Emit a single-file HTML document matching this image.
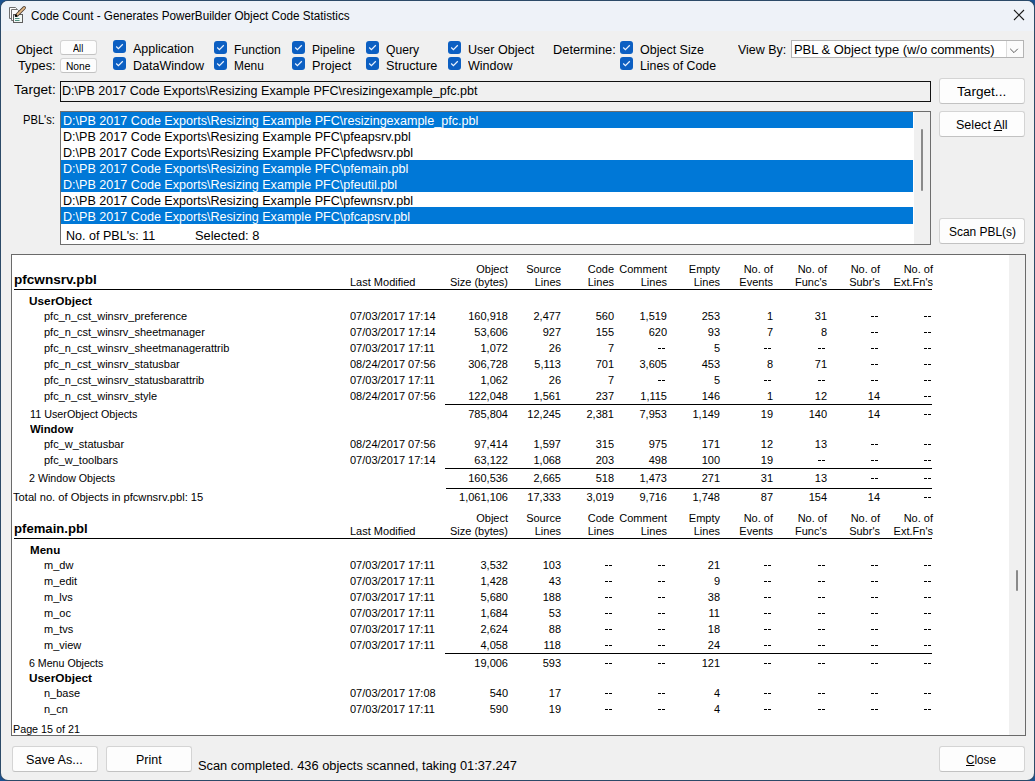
<!DOCTYPE html>
<html><head><meta charset="utf-8"><style>
html,body{margin:0;padding:0;width:1035px;height:781px;overflow:hidden;background:#1b5291;font-family:'Liberation Sans',sans-serif}
.t{position:absolute;white-space:pre;transform-origin:0 0;color:#000}
u{text-decoration:underline;text-underline-offset:1px}
</style></head><body>
<div style="position:absolute;left:0;top:0;width:1035px;height:781px;background:#1b5291"></div>
<div style="position:absolute;left:0;top:0;width:1035px;height:781px;background:#2c4a68;border-radius:8px"></div>
<div style="position:absolute;left:1px;top:1px;width:1033px;height:779px;background:#f0f0f0;border-radius:7px;overflow:hidden"><div style="position:absolute;left:0;top:0;width:1033px;height:30px;background:#eef2f8"></div></div>
<svg style="position:absolute;left:7px;top:5px" width="20" height="20" viewBox="0 0 20 20">
<path d="M2.5 2.5 H8.5 L9.5 3.5 V13.5 H2.5 Z" fill="#fbfbfb" stroke="#6e6e6e"/>
<path d="M4.5 4.5 H10.5 L11.5 5.5 V15.5 H4.5 Z" fill="#fbfbfb" stroke="#6e6e6e"/>
<rect x="6.5" y="9.5" width="9" height="8" fill="#f2f8f6" stroke="#5e5e5e"/>
<path d="M8 13.5 H12.5 M8 15.5 H12.5" stroke="#4f8f7f" stroke-width="1"/>
<path d="M17.2 2.8 L10 10" stroke="#4a3e34" stroke-width="3.4" stroke-linecap="round"/>
<path d="M17.2 2.8 L10.3 9.7" stroke="#e6b985" stroke-width="1.8" stroke-linecap="round"/>
<circle cx="9" cy="10.8" r="1.3" fill="#000"/>
</svg>
<svg style="position:absolute;left:1013px;top:9px" width="12" height="12" viewBox="0 0 12 12"><path d="M1 1 L11 11 M11 1 L1 11" stroke="#1a1a1a" stroke-width="1.1"/></svg>
<div style="position:absolute;left:60px;top:40px;width:37px;height:15px;box-sizing:border-box;background:#fdfdfd;border:1px solid #d4d4d4;border-bottom-color:#c2c2c2;border-radius:3px"></div>
<div style="position:absolute;left:60px;top:58px;width:37px;height:15px;box-sizing:border-box;background:#fdfdfd;border:1px solid #d4d4d4;border-bottom-color:#c2c2c2;border-radius:3px"></div>
<svg style="position:absolute;left:113px;top:40px" width="13" height="13" viewBox="0 0 13 13"><rect x="0" y="0" width="13" height="13" rx="3" fill="#0c5fc2"/><path d="M3.2 6.5 L5.4 8.6 L9.8 4.2" fill="none" stroke="#eaf2ff" stroke-width="1.25"/></svg>
<svg style="position:absolute;left:113px;top:57px" width="13" height="13" viewBox="0 0 13 13"><rect x="0" y="0" width="13" height="13" rx="3" fill="#0c5fc2"/><path d="M3.2 6.5 L5.4 8.6 L9.8 4.2" fill="none" stroke="#eaf2ff" stroke-width="1.25"/></svg>
<svg style="position:absolute;left:214px;top:41px" width="13" height="13" viewBox="0 0 13 13"><rect x="0" y="0" width="13" height="13" rx="3" fill="#0c5fc2"/><path d="M3.2 6.5 L5.4 8.6 L9.8 4.2" fill="none" stroke="#eaf2ff" stroke-width="1.25"/></svg>
<svg style="position:absolute;left:214px;top:57px" width="13" height="13" viewBox="0 0 13 13"><rect x="0" y="0" width="13" height="13" rx="3" fill="#0c5fc2"/><path d="M3.2 6.5 L5.4 8.6 L9.8 4.2" fill="none" stroke="#eaf2ff" stroke-width="1.25"/></svg>
<svg style="position:absolute;left:292px;top:41px" width="13" height="13" viewBox="0 0 13 13"><rect x="0" y="0" width="13" height="13" rx="3" fill="#0c5fc2"/><path d="M3.2 6.5 L5.4 8.6 L9.8 4.2" fill="none" stroke="#eaf2ff" stroke-width="1.25"/></svg>
<svg style="position:absolute;left:292px;top:57px" width="13" height="13" viewBox="0 0 13 13"><rect x="0" y="0" width="13" height="13" rx="3" fill="#0c5fc2"/><path d="M3.2 6.5 L5.4 8.6 L9.8 4.2" fill="none" stroke="#eaf2ff" stroke-width="1.25"/></svg>
<svg style="position:absolute;left:366px;top:41px" width="13" height="13" viewBox="0 0 13 13"><rect x="0" y="0" width="13" height="13" rx="3" fill="#0c5fc2"/><path d="M3.2 6.5 L5.4 8.6 L9.8 4.2" fill="none" stroke="#eaf2ff" stroke-width="1.25"/></svg>
<svg style="position:absolute;left:366px;top:57px" width="13" height="13" viewBox="0 0 13 13"><rect x="0" y="0" width="13" height="13" rx="3" fill="#0c5fc2"/><path d="M3.2 6.5 L5.4 8.6 L9.8 4.2" fill="none" stroke="#eaf2ff" stroke-width="1.25"/></svg>
<svg style="position:absolute;left:448px;top:41px" width="13" height="13" viewBox="0 0 13 13"><rect x="0" y="0" width="13" height="13" rx="3" fill="#0c5fc2"/><path d="M3.2 6.5 L5.4 8.6 L9.8 4.2" fill="none" stroke="#eaf2ff" stroke-width="1.25"/></svg>
<svg style="position:absolute;left:448px;top:57px" width="13" height="13" viewBox="0 0 13 13"><rect x="0" y="0" width="13" height="13" rx="3" fill="#0c5fc2"/><path d="M3.2 6.5 L5.4 8.6 L9.8 4.2" fill="none" stroke="#eaf2ff" stroke-width="1.25"/></svg>
<svg style="position:absolute;left:620px;top:41px" width="13" height="13" viewBox="0 0 13 13"><rect x="0" y="0" width="13" height="13" rx="3" fill="#0c5fc2"/><path d="M3.2 6.5 L5.4 8.6 L9.8 4.2" fill="none" stroke="#eaf2ff" stroke-width="1.25"/></svg>
<svg style="position:absolute;left:620px;top:57px" width="13" height="13" viewBox="0 0 13 13"><rect x="0" y="0" width="13" height="13" rx="3" fill="#0c5fc2"/><path d="M3.2 6.5 L5.4 8.6 L9.8 4.2" fill="none" stroke="#eaf2ff" stroke-width="1.25"/></svg>
<div style="position:absolute;left:791px;top:40px;width:233px;height:18px;box-sizing:border-box;background:#fff;border:1px solid #b4b4b4"></div>
<div style="position:absolute;left:1006px;top:41px;width:17px;height:16px;box-sizing:border-box;background:#fbfbfb;border-left:1px solid #dcdcdc"></div>
<svg style="position:absolute;left:1009px;top:47px" width="10" height="7" viewBox="0 0 10 7"><path d="M1.2 1.8 L5 5.6 L8.8 1.8" fill="none" stroke="#4a4a4a" stroke-width="0.9"/></svg>
<div style="position:absolute;left:60px;top:81px;width:871px;height:21px;box-sizing:border-box;background:#f0f0f0;border:1px solid #111"></div>
<div style="position:absolute;left:939px;top:78px;width:86px;height:26px;box-sizing:border-box;background:#fdfdfd;border:1px solid #d4d4d4;border-bottom-color:#c2c2c2;border-radius:3px"></div>
<div style="position:absolute;left:60px;top:111px;width:871px;height:134px;box-sizing:border-box;background:#fff;border:1px solid #6e6e6e"></div>
<div style="position:absolute;left:914px;top:112px;width:16px;height:132px;background:#f0f0f0"></div>
<div style="position:absolute;left:921px;top:129px;width:2px;height:62px;background:#8a8a8a;border-radius:1px"></div>
<div style="position:absolute;left:61px;top:112px;width:852px;height:16px;background:#0078d7"></div>
<div style="position:absolute;left:61px;top:160px;width:852px;height:16px;background:#0078d7"></div>
<div style="position:absolute;left:61px;top:176px;width:852px;height:16px;background:#0078d7"></div>
<div style="position:absolute;left:61px;top:207px;width:852px;height:17px;background:#0078d7"></div>
<div style="position:absolute;left:939px;top:111px;width:86px;height:26px;box-sizing:border-box;background:#fdfdfd;border:1px solid #d4d4d4;border-bottom-color:#c2c2c2;border-radius:3px"></div>
<div style="position:absolute;left:939px;top:218px;width:86px;height:26px;box-sizing:border-box;background:#fdfdfd;border:1px solid #d4d4d4;border-bottom-color:#c2c2c2;border-radius:3px"></div>
<div style="position:absolute;left:11px;top:254px;width:1015px;height:482px;box-sizing:border-box;background:#fff;border:1px solid #6a6a6a"></div>
<div style="position:absolute;left:1009px;top:255px;width:16px;height:480px;background:#f0f0f0"></div>
<div style="position:absolute;left:1016px;top:570px;width:2px;height:21px;background:#8a8a8a;border-radius:1px"></div>
<div style="position:absolute;left:14px;top:289px;width:918px;height:1px;background:#000"></div>
<div style="position:absolute;left:871px;top:316px;width:3px;height:1px;background:#000"></div><div style="position:absolute;left:875px;top:316px;width:3px;height:1px;background:#000"></div>
<div style="position:absolute;left:924px;top:316px;width:3px;height:1px;background:#000"></div><div style="position:absolute;left:928px;top:316px;width:3px;height:1px;background:#000"></div>
<div style="position:absolute;left:871px;top:332px;width:3px;height:1px;background:#000"></div><div style="position:absolute;left:875px;top:332px;width:3px;height:1px;background:#000"></div>
<div style="position:absolute;left:924px;top:332px;width:3px;height:1px;background:#000"></div><div style="position:absolute;left:928px;top:332px;width:3px;height:1px;background:#000"></div>
<div style="position:absolute;left:658px;top:348px;width:3px;height:1px;background:#000"></div><div style="position:absolute;left:662px;top:348px;width:3px;height:1px;background:#000"></div>
<div style="position:absolute;left:764px;top:348px;width:3px;height:1px;background:#000"></div><div style="position:absolute;left:768px;top:348px;width:3px;height:1px;background:#000"></div>
<div style="position:absolute;left:818px;top:348px;width:3px;height:1px;background:#000"></div><div style="position:absolute;left:822px;top:348px;width:3px;height:1px;background:#000"></div>
<div style="position:absolute;left:871px;top:348px;width:3px;height:1px;background:#000"></div><div style="position:absolute;left:875px;top:348px;width:3px;height:1px;background:#000"></div>
<div style="position:absolute;left:924px;top:348px;width:3px;height:1px;background:#000"></div><div style="position:absolute;left:928px;top:348px;width:3px;height:1px;background:#000"></div>
<div style="position:absolute;left:871px;top:364px;width:3px;height:1px;background:#000"></div><div style="position:absolute;left:875px;top:364px;width:3px;height:1px;background:#000"></div>
<div style="position:absolute;left:924px;top:364px;width:3px;height:1px;background:#000"></div><div style="position:absolute;left:928px;top:364px;width:3px;height:1px;background:#000"></div>
<div style="position:absolute;left:658px;top:380px;width:3px;height:1px;background:#000"></div><div style="position:absolute;left:662px;top:380px;width:3px;height:1px;background:#000"></div>
<div style="position:absolute;left:764px;top:380px;width:3px;height:1px;background:#000"></div><div style="position:absolute;left:768px;top:380px;width:3px;height:1px;background:#000"></div>
<div style="position:absolute;left:818px;top:380px;width:3px;height:1px;background:#000"></div><div style="position:absolute;left:822px;top:380px;width:3px;height:1px;background:#000"></div>
<div style="position:absolute;left:871px;top:380px;width:3px;height:1px;background:#000"></div><div style="position:absolute;left:875px;top:380px;width:3px;height:1px;background:#000"></div>
<div style="position:absolute;left:924px;top:380px;width:3px;height:1px;background:#000"></div><div style="position:absolute;left:928px;top:380px;width:3px;height:1px;background:#000"></div>
<div style="position:absolute;left:924px;top:396px;width:3px;height:1px;background:#000"></div><div style="position:absolute;left:928px;top:396px;width:3px;height:1px;background:#000"></div>
<div style="position:absolute;left:445px;top:404px;width:487px;height:1px;background:#000"></div>
<div style="position:absolute;left:924px;top:414px;width:3px;height:1px;background:#000"></div><div style="position:absolute;left:928px;top:414px;width:3px;height:1px;background:#000"></div>
<div style="position:absolute;left:871px;top:444px;width:3px;height:1px;background:#000"></div><div style="position:absolute;left:875px;top:444px;width:3px;height:1px;background:#000"></div>
<div style="position:absolute;left:924px;top:444px;width:3px;height:1px;background:#000"></div><div style="position:absolute;left:928px;top:444px;width:3px;height:1px;background:#000"></div>
<div style="position:absolute;left:818px;top:460px;width:3px;height:1px;background:#000"></div><div style="position:absolute;left:822px;top:460px;width:3px;height:1px;background:#000"></div>
<div style="position:absolute;left:871px;top:460px;width:3px;height:1px;background:#000"></div><div style="position:absolute;left:875px;top:460px;width:3px;height:1px;background:#000"></div>
<div style="position:absolute;left:924px;top:460px;width:3px;height:1px;background:#000"></div><div style="position:absolute;left:928px;top:460px;width:3px;height:1px;background:#000"></div>
<div style="position:absolute;left:445px;top:468px;width:487px;height:1px;background:#000"></div>
<div style="position:absolute;left:871px;top:478px;width:3px;height:1px;background:#000"></div><div style="position:absolute;left:875px;top:478px;width:3px;height:1px;background:#000"></div>
<div style="position:absolute;left:924px;top:478px;width:3px;height:1px;background:#000"></div><div style="position:absolute;left:928px;top:478px;width:3px;height:1px;background:#000"></div>
<div style="position:absolute;left:446px;top:488px;width:486px;height:1px;background:#000"></div>
<div style="position:absolute;left:924px;top:497px;width:3px;height:1px;background:#000"></div><div style="position:absolute;left:928px;top:497px;width:3px;height:1px;background:#000"></div>
<div style="position:absolute;left:14px;top:538px;width:918px;height:1px;background:#000"></div>
<div style="position:absolute;left:605px;top:565px;width:3px;height:1px;background:#000"></div><div style="position:absolute;left:609px;top:565px;width:3px;height:1px;background:#000"></div>
<div style="position:absolute;left:658px;top:565px;width:3px;height:1px;background:#000"></div><div style="position:absolute;left:662px;top:565px;width:3px;height:1px;background:#000"></div>
<div style="position:absolute;left:764px;top:565px;width:3px;height:1px;background:#000"></div><div style="position:absolute;left:768px;top:565px;width:3px;height:1px;background:#000"></div>
<div style="position:absolute;left:818px;top:565px;width:3px;height:1px;background:#000"></div><div style="position:absolute;left:822px;top:565px;width:3px;height:1px;background:#000"></div>
<div style="position:absolute;left:871px;top:565px;width:3px;height:1px;background:#000"></div><div style="position:absolute;left:875px;top:565px;width:3px;height:1px;background:#000"></div>
<div style="position:absolute;left:924px;top:565px;width:3px;height:1px;background:#000"></div><div style="position:absolute;left:928px;top:565px;width:3px;height:1px;background:#000"></div>
<div style="position:absolute;left:605px;top:581px;width:3px;height:1px;background:#000"></div><div style="position:absolute;left:609px;top:581px;width:3px;height:1px;background:#000"></div>
<div style="position:absolute;left:658px;top:581px;width:3px;height:1px;background:#000"></div><div style="position:absolute;left:662px;top:581px;width:3px;height:1px;background:#000"></div>
<div style="position:absolute;left:764px;top:581px;width:3px;height:1px;background:#000"></div><div style="position:absolute;left:768px;top:581px;width:3px;height:1px;background:#000"></div>
<div style="position:absolute;left:818px;top:581px;width:3px;height:1px;background:#000"></div><div style="position:absolute;left:822px;top:581px;width:3px;height:1px;background:#000"></div>
<div style="position:absolute;left:871px;top:581px;width:3px;height:1px;background:#000"></div><div style="position:absolute;left:875px;top:581px;width:3px;height:1px;background:#000"></div>
<div style="position:absolute;left:924px;top:581px;width:3px;height:1px;background:#000"></div><div style="position:absolute;left:928px;top:581px;width:3px;height:1px;background:#000"></div>
<div style="position:absolute;left:605px;top:597px;width:3px;height:1px;background:#000"></div><div style="position:absolute;left:609px;top:597px;width:3px;height:1px;background:#000"></div>
<div style="position:absolute;left:658px;top:597px;width:3px;height:1px;background:#000"></div><div style="position:absolute;left:662px;top:597px;width:3px;height:1px;background:#000"></div>
<div style="position:absolute;left:764px;top:597px;width:3px;height:1px;background:#000"></div><div style="position:absolute;left:768px;top:597px;width:3px;height:1px;background:#000"></div>
<div style="position:absolute;left:818px;top:597px;width:3px;height:1px;background:#000"></div><div style="position:absolute;left:822px;top:597px;width:3px;height:1px;background:#000"></div>
<div style="position:absolute;left:871px;top:597px;width:3px;height:1px;background:#000"></div><div style="position:absolute;left:875px;top:597px;width:3px;height:1px;background:#000"></div>
<div style="position:absolute;left:924px;top:597px;width:3px;height:1px;background:#000"></div><div style="position:absolute;left:928px;top:597px;width:3px;height:1px;background:#000"></div>
<div style="position:absolute;left:605px;top:613px;width:3px;height:1px;background:#000"></div><div style="position:absolute;left:609px;top:613px;width:3px;height:1px;background:#000"></div>
<div style="position:absolute;left:658px;top:613px;width:3px;height:1px;background:#000"></div><div style="position:absolute;left:662px;top:613px;width:3px;height:1px;background:#000"></div>
<div style="position:absolute;left:764px;top:613px;width:3px;height:1px;background:#000"></div><div style="position:absolute;left:768px;top:613px;width:3px;height:1px;background:#000"></div>
<div style="position:absolute;left:818px;top:613px;width:3px;height:1px;background:#000"></div><div style="position:absolute;left:822px;top:613px;width:3px;height:1px;background:#000"></div>
<div style="position:absolute;left:871px;top:613px;width:3px;height:1px;background:#000"></div><div style="position:absolute;left:875px;top:613px;width:3px;height:1px;background:#000"></div>
<div style="position:absolute;left:924px;top:613px;width:3px;height:1px;background:#000"></div><div style="position:absolute;left:928px;top:613px;width:3px;height:1px;background:#000"></div>
<div style="position:absolute;left:605px;top:629px;width:3px;height:1px;background:#000"></div><div style="position:absolute;left:609px;top:629px;width:3px;height:1px;background:#000"></div>
<div style="position:absolute;left:658px;top:629px;width:3px;height:1px;background:#000"></div><div style="position:absolute;left:662px;top:629px;width:3px;height:1px;background:#000"></div>
<div style="position:absolute;left:764px;top:629px;width:3px;height:1px;background:#000"></div><div style="position:absolute;left:768px;top:629px;width:3px;height:1px;background:#000"></div>
<div style="position:absolute;left:818px;top:629px;width:3px;height:1px;background:#000"></div><div style="position:absolute;left:822px;top:629px;width:3px;height:1px;background:#000"></div>
<div style="position:absolute;left:871px;top:629px;width:3px;height:1px;background:#000"></div><div style="position:absolute;left:875px;top:629px;width:3px;height:1px;background:#000"></div>
<div style="position:absolute;left:924px;top:629px;width:3px;height:1px;background:#000"></div><div style="position:absolute;left:928px;top:629px;width:3px;height:1px;background:#000"></div>
<div style="position:absolute;left:605px;top:645px;width:3px;height:1px;background:#000"></div><div style="position:absolute;left:609px;top:645px;width:3px;height:1px;background:#000"></div>
<div style="position:absolute;left:658px;top:645px;width:3px;height:1px;background:#000"></div><div style="position:absolute;left:662px;top:645px;width:3px;height:1px;background:#000"></div>
<div style="position:absolute;left:764px;top:645px;width:3px;height:1px;background:#000"></div><div style="position:absolute;left:768px;top:645px;width:3px;height:1px;background:#000"></div>
<div style="position:absolute;left:818px;top:645px;width:3px;height:1px;background:#000"></div><div style="position:absolute;left:822px;top:645px;width:3px;height:1px;background:#000"></div>
<div style="position:absolute;left:871px;top:645px;width:3px;height:1px;background:#000"></div><div style="position:absolute;left:875px;top:645px;width:3px;height:1px;background:#000"></div>
<div style="position:absolute;left:924px;top:645px;width:3px;height:1px;background:#000"></div><div style="position:absolute;left:928px;top:645px;width:3px;height:1px;background:#000"></div>
<div style="position:absolute;left:445px;top:653px;width:487px;height:1px;background:#000"></div>
<div style="position:absolute;left:605px;top:663px;width:3px;height:1px;background:#000"></div><div style="position:absolute;left:609px;top:663px;width:3px;height:1px;background:#000"></div>
<div style="position:absolute;left:658px;top:663px;width:3px;height:1px;background:#000"></div><div style="position:absolute;left:662px;top:663px;width:3px;height:1px;background:#000"></div>
<div style="position:absolute;left:764px;top:663px;width:3px;height:1px;background:#000"></div><div style="position:absolute;left:768px;top:663px;width:3px;height:1px;background:#000"></div>
<div style="position:absolute;left:818px;top:663px;width:3px;height:1px;background:#000"></div><div style="position:absolute;left:822px;top:663px;width:3px;height:1px;background:#000"></div>
<div style="position:absolute;left:871px;top:663px;width:3px;height:1px;background:#000"></div><div style="position:absolute;left:875px;top:663px;width:3px;height:1px;background:#000"></div>
<div style="position:absolute;left:924px;top:663px;width:3px;height:1px;background:#000"></div><div style="position:absolute;left:928px;top:663px;width:3px;height:1px;background:#000"></div>
<div style="position:absolute;left:605px;top:693px;width:3px;height:1px;background:#000"></div><div style="position:absolute;left:609px;top:693px;width:3px;height:1px;background:#000"></div>
<div style="position:absolute;left:658px;top:693px;width:3px;height:1px;background:#000"></div><div style="position:absolute;left:662px;top:693px;width:3px;height:1px;background:#000"></div>
<div style="position:absolute;left:764px;top:693px;width:3px;height:1px;background:#000"></div><div style="position:absolute;left:768px;top:693px;width:3px;height:1px;background:#000"></div>
<div style="position:absolute;left:818px;top:693px;width:3px;height:1px;background:#000"></div><div style="position:absolute;left:822px;top:693px;width:3px;height:1px;background:#000"></div>
<div style="position:absolute;left:871px;top:693px;width:3px;height:1px;background:#000"></div><div style="position:absolute;left:875px;top:693px;width:3px;height:1px;background:#000"></div>
<div style="position:absolute;left:924px;top:693px;width:3px;height:1px;background:#000"></div><div style="position:absolute;left:928px;top:693px;width:3px;height:1px;background:#000"></div>
<div style="position:absolute;left:605px;top:709px;width:3px;height:1px;background:#000"></div><div style="position:absolute;left:609px;top:709px;width:3px;height:1px;background:#000"></div>
<div style="position:absolute;left:658px;top:709px;width:3px;height:1px;background:#000"></div><div style="position:absolute;left:662px;top:709px;width:3px;height:1px;background:#000"></div>
<div style="position:absolute;left:764px;top:709px;width:3px;height:1px;background:#000"></div><div style="position:absolute;left:768px;top:709px;width:3px;height:1px;background:#000"></div>
<div style="position:absolute;left:818px;top:709px;width:3px;height:1px;background:#000"></div><div style="position:absolute;left:822px;top:709px;width:3px;height:1px;background:#000"></div>
<div style="position:absolute;left:871px;top:709px;width:3px;height:1px;background:#000"></div><div style="position:absolute;left:875px;top:709px;width:3px;height:1px;background:#000"></div>
<div style="position:absolute;left:924px;top:709px;width:3px;height:1px;background:#000"></div><div style="position:absolute;left:928px;top:709px;width:3px;height:1px;background:#000"></div>
<div style="position:absolute;left:12px;top:746px;width:86px;height:26px;box-sizing:border-box;background:#fdfdfd;border:1px solid #d4d4d4;border-bottom-color:#c2c2c2;border-radius:3px"></div>
<div style="position:absolute;left:106px;top:746px;width:86px;height:26px;box-sizing:border-box;background:#fdfdfd;border:1px solid #d4d4d4;border-bottom-color:#c2c2c2;border-radius:3px"></div>
<div style="position:absolute;left:939px;top:746px;width:86px;height:26px;box-sizing:border-box;background:#fdfdfd;border:1px solid #d4d4d4;border-bottom-color:#c2c2c2;border-radius:3px"></div>
<div class="t" style="left:31.0px;top:10.0px;font:12px 'Liberation Sans';line-height:12.0px;transform:scaleX(0.9748)">Code Count - Generates PowerBuilder Object Code Statistics</div>
<div class="t" style="left:15.5px;top:44.0px;font:12px 'Liberation Sans';line-height:12.0px;transform:scaleX(1.0523)">Object</div>
<div class="t" style="left:17.5px;top:60.0px;font:12px 'Liberation Sans';line-height:12.0px;transform:scaleX(1.0634)">Types:</div>
<div class="t" style="left:73.0px;top:43.0px;font:10.5px 'Liberation Sans';line-height:10.5px;transform:scaleX(0.8739)">All</div>
<div class="t" style="left:65.6px;top:61.0px;font:10.5px 'Liberation Sans';line-height:10.5px;transform:scaleX(0.9717)">None</div>
<div class="t" style="left:132.5px;top:43.0px;font:12px 'Liberation Sans';line-height:12.0px;transform:scaleX(1.0389)">Application</div>
<div class="t" style="left:132.5px;top:60.0px;font:12px 'Liberation Sans';line-height:12.0px;transform:scaleX(1.0436)">DataWindow</div>
<div class="t" style="left:233.7px;top:44.0px;font:12px 'Liberation Sans';line-height:12.0px;transform:scaleX(1.0145)">Function</div>
<div class="t" style="left:233.7px;top:60.0px;font:12px 'Liberation Sans';line-height:12.0px;transform:scaleX(0.9923)">Menu</div>
<div class="t" style="left:311.5px;top:44.0px;font:12px 'Liberation Sans';line-height:12.0px;transform:scaleX(1.0046)">Pipeline</div>
<div class="t" style="left:311.5px;top:60.0px;font:12px 'Liberation Sans';line-height:12.0px;transform:scaleX(1.0546)">Project</div>
<div class="t" style="left:385.9px;top:44.0px;font:12px 'Liberation Sans';line-height:12.0px;transform:scaleX(1.0126)">Query</div>
<div class="t" style="left:385.9px;top:60.0px;font:12px 'Liberation Sans';line-height:12.0px;transform:scaleX(1.0557)">Structure</div>
<div class="t" style="left:467.7px;top:44.0px;font:12px 'Liberation Sans';line-height:12.0px;transform:scaleX(1.0464)">User Object</div>
<div class="t" style="left:467.7px;top:60.0px;font:12px 'Liberation Sans';line-height:12.0px;transform:scaleX(1.0448)">Window</div>
<div class="t" style="left:552.5px;top:44.0px;font:12px 'Liberation Sans';line-height:12.0px;transform:scaleX(1.0684)">Determine:</div>
<div class="t" style="left:639.5px;top:44.0px;font:12px 'Liberation Sans';line-height:12.0px;transform:scaleX(1.0414)">Object Size</div>
<div class="t" style="left:639.5px;top:60.0px;font:12px 'Liberation Sans';line-height:12.0px;transform:scaleX(1.0262)">Lines of Code</div>
<div class="t" style="left:738.3px;top:44.0px;font:12px 'Liberation Sans';line-height:12.0px;transform:scaleX(1.0394)">View By:</div>
<div class="t" style="left:794.3px;top:44.0px;font:12px 'Liberation Sans';line-height:12.0px;transform:scaleX(1.0768)">PBL &amp; Object type (w/o comments)</div>
<div class="t" style="left:13.5px;top:84.0px;font:12px 'Liberation Sans';line-height:12.0px;transform:scaleX(1.1366)">Target:</div>
<div class="t" style="left:61.5px;top:85.0px;font:12px 'Liberation Sans';line-height:12.0px;transform:scaleX(1.0470)">D:\PB 2017 Code Exports\Resizing Example PFC\resizingexample_pfc.pbt</div>
<div class="t" style="left:957.0px;top:86.0px;font:12px 'Liberation Sans';line-height:12.0px;transform:scaleX(1.1347)">Target...</div>
<div class="t" style="left:22.6px;top:114.0px;font:12px 'Liberation Sans';line-height:12.0px;transform:scaleX(0.9297)">PBL&#x27;s:</div>
<div class="t" style="left:62.6px;top:115.0px;font:12px 'Liberation Sans';line-height:12.0px;color:#fff;transform:scaleX(1.0480)">D:\PB 2017 Code Exports\Resizing Example PFC\resizingexample_pfc.pbl</div>
<div class="t" style="left:62.6px;top:131.0px;font:12px 'Liberation Sans';line-height:12.0px;transform:scaleX(1.0480)">D:\PB 2017 Code Exports\Resizing Example PFC\pfeapsrv.pbl</div>
<div class="t" style="left:62.6px;top:147.0px;font:12px 'Liberation Sans';line-height:12.0px;transform:scaleX(1.0480)">D:\PB 2017 Code Exports\Resizing Example PFC\pfedwsrv.pbl</div>
<div class="t" style="left:62.6px;top:163.0px;font:12px 'Liberation Sans';line-height:12.0px;color:#fff;transform:scaleX(1.0480)">D:\PB 2017 Code Exports\Resizing Example PFC\pfemain.pbl</div>
<div class="t" style="left:62.6px;top:179.0px;font:12px 'Liberation Sans';line-height:12.0px;color:#fff;transform:scaleX(1.0480)">D:\PB 2017 Code Exports\Resizing Example PFC\pfeutil.pbl</div>
<div class="t" style="left:62.6px;top:195.0px;font:12px 'Liberation Sans';line-height:12.0px;transform:scaleX(1.0480)">D:\PB 2017 Code Exports\Resizing Example PFC\pfewnsrv.pbl</div>
<div class="t" style="left:62.6px;top:211.0px;font:12px 'Liberation Sans';line-height:12.0px;color:#fff;transform:scaleX(1.0480)">D:\PB 2017 Code Exports\Resizing Example PFC\pfcapsrv.pbl</div>
<div class="t" style="left:66.3px;top:230.0px;font:12px 'Liberation Sans';line-height:12.0px;transform:scaleX(1.0450)">No. of PBL&#x27;s: 11</div>
<div class="t" style="left:195.3px;top:230.0px;font:12px 'Liberation Sans';line-height:12.0px;transform:scaleX(1.0725)">Selected: 8</div>
<div class="t" style="left:956.0px;top:119.0px;font:12px 'Liberation Sans';line-height:12.0px;transform:scaleX(1.0454)">Select <u>A</u>ll</div>
<div class="t" style="left:948.5px;top:226.0px;font:12px 'Liberation Sans';line-height:12.0px;transform:scaleX(0.9947)">Scan PBL(s)</div>
<div class="t" style="left:13.7px;top:274.0px;font:bold 12px 'Liberation Sans';line-height:12.0px;transform:scaleX(1.1309)">pfcwnsrv.pbl</div>
<div class="t" style="left:349.5px;top:278.0px;font:10px 'Liberation Sans';line-height:10.0px;transform:scaleX(1.1000)">Last Modified</div>
<div class="t" style="left:507.6px;top:265.0px;font:10px 'Liberation Sans';line-height:10.0px;transform:scaleX(1.1000) translateX(-100%)">Object</div>
<div class="t" style="left:507.6px;top:278.0px;font:10px 'Liberation Sans';line-height:10.0px;transform:scaleX(1.1000) translateX(-100%)">Size (bytes)</div>
<div class="t" style="left:560.6px;top:265.0px;font:10px 'Liberation Sans';line-height:10.0px;transform:scaleX(1.1000) translateX(-100%)">Source</div>
<div class="t" style="left:560.6px;top:278.0px;font:10px 'Liberation Sans';line-height:10.0px;transform:scaleX(1.1000) translateX(-100%)">Lines</div>
<div class="t" style="left:613.6px;top:265.0px;font:10px 'Liberation Sans';line-height:10.0px;transform:scaleX(1.1000) translateX(-100%)">Code</div>
<div class="t" style="left:613.6px;top:278.0px;font:10px 'Liberation Sans';line-height:10.0px;transform:scaleX(1.1000) translateX(-100%)">Lines</div>
<div class="t" style="left:666.6px;top:265.0px;font:10px 'Liberation Sans';line-height:10.0px;transform:scaleX(1.1000) translateX(-100%)">Comment</div>
<div class="t" style="left:666.6px;top:278.0px;font:10px 'Liberation Sans';line-height:10.0px;transform:scaleX(1.1000) translateX(-100%)">Lines</div>
<div class="t" style="left:719.6px;top:265.0px;font:10px 'Liberation Sans';line-height:10.0px;transform:scaleX(1.1000) translateX(-100%)">Empty</div>
<div class="t" style="left:719.6px;top:278.0px;font:10px 'Liberation Sans';line-height:10.0px;transform:scaleX(1.1000) translateX(-100%)">Lines</div>
<div class="t" style="left:772.6px;top:265.0px;font:10px 'Liberation Sans';line-height:10.0px;transform:scaleX(1.1000) translateX(-100%)">No. of</div>
<div class="t" style="left:772.6px;top:278.0px;font:10px 'Liberation Sans';line-height:10.0px;transform:scaleX(1.1000) translateX(-100%)">Events</div>
<div class="t" style="left:826.6px;top:265.0px;font:10px 'Liberation Sans';line-height:10.0px;transform:scaleX(1.1000) translateX(-100%)">No. of</div>
<div class="t" style="left:826.6px;top:278.0px;font:10px 'Liberation Sans';line-height:10.0px;transform:scaleX(1.1000) translateX(-100%)">Func&#x27;s</div>
<div class="t" style="left:879.6px;top:265.0px;font:10px 'Liberation Sans';line-height:10.0px;transform:scaleX(1.1000) translateX(-100%)">No. of</div>
<div class="t" style="left:879.6px;top:278.0px;font:10px 'Liberation Sans';line-height:10.0px;transform:scaleX(1.1000) translateX(-100%)">Subr&#x27;s</div>
<div class="t" style="left:932.6px;top:265.0px;font:10px 'Liberation Sans';line-height:10.0px;transform:scaleX(1.1000) translateX(-100%)">No. of</div>
<div class="t" style="left:932.6px;top:278.0px;font:10px 'Liberation Sans';line-height:10.0px;transform:scaleX(1.1000) translateX(-100%)">Ext.Fn&#x27;s</div>
<div class="t" style="left:29.3px;top:297.0px;font:bold 10px 'Liberation Sans';line-height:10.0px;transform:scaleX(1.1807)">UserObject</div>
<div class="t" style="left:43.8px;top:312.0px;font:10px 'Liberation Sans';line-height:10.0px;transform:scaleX(1.1000)">pfc_n_cst_winsrv_preference</div>
<div class="t" style="left:349.5px;top:312.0px;font:10px 'Liberation Sans';line-height:10.0px;transform:scaleX(1.1000)">07/03/2017 17:14</div>
<div class="t" style="left:508.1px;top:312.0px;font:10px 'Liberation Sans';line-height:10.0px;transform:scaleX(1.1000) translateX(-100%)">160,918</div>
<div class="t" style="left:561.1px;top:312.0px;font:10px 'Liberation Sans';line-height:10.0px;transform:scaleX(1.1000) translateX(-100%)">2,477</div>
<div class="t" style="left:614.1px;top:312.0px;font:10px 'Liberation Sans';line-height:10.0px;transform:scaleX(1.1000) translateX(-100%)">560</div>
<div class="t" style="left:667.1px;top:312.0px;font:10px 'Liberation Sans';line-height:10.0px;transform:scaleX(1.1000) translateX(-100%)">1,519</div>
<div class="t" style="left:720.1px;top:312.0px;font:10px 'Liberation Sans';line-height:10.0px;transform:scaleX(1.1000) translateX(-100%)">253</div>
<div class="t" style="left:773.1px;top:312.0px;font:10px 'Liberation Sans';line-height:10.0px;transform:scaleX(1.1000) translateX(-100%)">1</div>
<div class="t" style="left:827.1px;top:312.0px;font:10px 'Liberation Sans';line-height:10.0px;transform:scaleX(1.1000) translateX(-100%)">31</div>
<div class="t" style="left:43.8px;top:328.0px;font:10px 'Liberation Sans';line-height:10.0px;transform:scaleX(1.1000)">pfc_n_cst_winsrv_sheetmanager</div>
<div class="t" style="left:349.5px;top:328.0px;font:10px 'Liberation Sans';line-height:10.0px;transform:scaleX(1.1000)">07/03/2017 17:14</div>
<div class="t" style="left:508.1px;top:328.0px;font:10px 'Liberation Sans';line-height:10.0px;transform:scaleX(1.1000) translateX(-100%)">53,606</div>
<div class="t" style="left:561.1px;top:328.0px;font:10px 'Liberation Sans';line-height:10.0px;transform:scaleX(1.1000) translateX(-100%)">927</div>
<div class="t" style="left:614.1px;top:328.0px;font:10px 'Liberation Sans';line-height:10.0px;transform:scaleX(1.1000) translateX(-100%)">155</div>
<div class="t" style="left:667.1px;top:328.0px;font:10px 'Liberation Sans';line-height:10.0px;transform:scaleX(1.1000) translateX(-100%)">620</div>
<div class="t" style="left:720.1px;top:328.0px;font:10px 'Liberation Sans';line-height:10.0px;transform:scaleX(1.1000) translateX(-100%)">93</div>
<div class="t" style="left:773.1px;top:328.0px;font:10px 'Liberation Sans';line-height:10.0px;transform:scaleX(1.1000) translateX(-100%)">7</div>
<div class="t" style="left:827.1px;top:328.0px;font:10px 'Liberation Sans';line-height:10.0px;transform:scaleX(1.1000) translateX(-100%)">8</div>
<div class="t" style="left:43.8px;top:344.0px;font:10px 'Liberation Sans';line-height:10.0px;transform:scaleX(1.1000)">pfc_n_cst_winsrv_sheetmanagerattrib</div>
<div class="t" style="left:349.5px;top:344.0px;font:10px 'Liberation Sans';line-height:10.0px;transform:scaleX(1.1000)">07/03/2017 17:11</div>
<div class="t" style="left:508.1px;top:344.0px;font:10px 'Liberation Sans';line-height:10.0px;transform:scaleX(1.1000) translateX(-100%)">1,072</div>
<div class="t" style="left:561.1px;top:344.0px;font:10px 'Liberation Sans';line-height:10.0px;transform:scaleX(1.1000) translateX(-100%)">26</div>
<div class="t" style="left:614.1px;top:344.0px;font:10px 'Liberation Sans';line-height:10.0px;transform:scaleX(1.1000) translateX(-100%)">7</div>
<div class="t" style="left:720.1px;top:344.0px;font:10px 'Liberation Sans';line-height:10.0px;transform:scaleX(1.1000) translateX(-100%)">5</div>
<div class="t" style="left:43.8px;top:360.0px;font:10px 'Liberation Sans';line-height:10.0px;transform:scaleX(1.1000)">pfc_n_cst_winsrv_statusbar</div>
<div class="t" style="left:349.5px;top:360.0px;font:10px 'Liberation Sans';line-height:10.0px;transform:scaleX(1.1000)">08/24/2017 07:56</div>
<div class="t" style="left:508.1px;top:360.0px;font:10px 'Liberation Sans';line-height:10.0px;transform:scaleX(1.1000) translateX(-100%)">306,728</div>
<div class="t" style="left:561.1px;top:360.0px;font:10px 'Liberation Sans';line-height:10.0px;transform:scaleX(1.1000) translateX(-100%)">5,113</div>
<div class="t" style="left:614.1px;top:360.0px;font:10px 'Liberation Sans';line-height:10.0px;transform:scaleX(1.1000) translateX(-100%)">701</div>
<div class="t" style="left:667.1px;top:360.0px;font:10px 'Liberation Sans';line-height:10.0px;transform:scaleX(1.1000) translateX(-100%)">3,605</div>
<div class="t" style="left:720.1px;top:360.0px;font:10px 'Liberation Sans';line-height:10.0px;transform:scaleX(1.1000) translateX(-100%)">453</div>
<div class="t" style="left:773.1px;top:360.0px;font:10px 'Liberation Sans';line-height:10.0px;transform:scaleX(1.1000) translateX(-100%)">8</div>
<div class="t" style="left:827.1px;top:360.0px;font:10px 'Liberation Sans';line-height:10.0px;transform:scaleX(1.1000) translateX(-100%)">71</div>
<div class="t" style="left:43.8px;top:376.0px;font:10px 'Liberation Sans';line-height:10.0px;transform:scaleX(1.1000)">pfc_n_cst_winsrv_statusbarattrib</div>
<div class="t" style="left:349.5px;top:376.0px;font:10px 'Liberation Sans';line-height:10.0px;transform:scaleX(1.1000)">07/03/2017 17:11</div>
<div class="t" style="left:508.1px;top:376.0px;font:10px 'Liberation Sans';line-height:10.0px;transform:scaleX(1.1000) translateX(-100%)">1,062</div>
<div class="t" style="left:561.1px;top:376.0px;font:10px 'Liberation Sans';line-height:10.0px;transform:scaleX(1.1000) translateX(-100%)">26</div>
<div class="t" style="left:614.1px;top:376.0px;font:10px 'Liberation Sans';line-height:10.0px;transform:scaleX(1.1000) translateX(-100%)">7</div>
<div class="t" style="left:720.1px;top:376.0px;font:10px 'Liberation Sans';line-height:10.0px;transform:scaleX(1.1000) translateX(-100%)">5</div>
<div class="t" style="left:43.8px;top:392.0px;font:10px 'Liberation Sans';line-height:10.0px;transform:scaleX(1.1000)">pfc_n_cst_winsrv_style</div>
<div class="t" style="left:349.5px;top:392.0px;font:10px 'Liberation Sans';line-height:10.0px;transform:scaleX(1.1000)">08/24/2017 07:56</div>
<div class="t" style="left:508.1px;top:392.0px;font:10px 'Liberation Sans';line-height:10.0px;transform:scaleX(1.1000) translateX(-100%)">122,048</div>
<div class="t" style="left:561.1px;top:392.0px;font:10px 'Liberation Sans';line-height:10.0px;transform:scaleX(1.1000) translateX(-100%)">1,561</div>
<div class="t" style="left:614.1px;top:392.0px;font:10px 'Liberation Sans';line-height:10.0px;transform:scaleX(1.1000) translateX(-100%)">237</div>
<div class="t" style="left:667.1px;top:392.0px;font:10px 'Liberation Sans';line-height:10.0px;transform:scaleX(1.1000) translateX(-100%)">1,115</div>
<div class="t" style="left:720.1px;top:392.0px;font:10px 'Liberation Sans';line-height:10.0px;transform:scaleX(1.1000) translateX(-100%)">146</div>
<div class="t" style="left:773.1px;top:392.0px;font:10px 'Liberation Sans';line-height:10.0px;transform:scaleX(1.1000) translateX(-100%)">1</div>
<div class="t" style="left:827.1px;top:392.0px;font:10px 'Liberation Sans';line-height:10.0px;transform:scaleX(1.1000) translateX(-100%)">12</div>
<div class="t" style="left:880.1px;top:392.0px;font:10px 'Liberation Sans';line-height:10.0px;transform:scaleX(1.1000) translateX(-100%)">14</div>
<div class="t" style="left:29.5px;top:410.0px;font:10px 'Liberation Sans';line-height:10.0px;transform:scaleX(1.0765)">11 UserObject Objects</div>
<div class="t" style="left:508.1px;top:410.0px;font:10px 'Liberation Sans';line-height:10.0px;transform:scaleX(1.1000) translateX(-100%)">785,804</div>
<div class="t" style="left:561.1px;top:410.0px;font:10px 'Liberation Sans';line-height:10.0px;transform:scaleX(1.1000) translateX(-100%)">12,245</div>
<div class="t" style="left:614.1px;top:410.0px;font:10px 'Liberation Sans';line-height:10.0px;transform:scaleX(1.1000) translateX(-100%)">2,381</div>
<div class="t" style="left:667.1px;top:410.0px;font:10px 'Liberation Sans';line-height:10.0px;transform:scaleX(1.1000) translateX(-100%)">7,953</div>
<div class="t" style="left:720.1px;top:410.0px;font:10px 'Liberation Sans';line-height:10.0px;transform:scaleX(1.1000) translateX(-100%)">1,149</div>
<div class="t" style="left:773.1px;top:410.0px;font:10px 'Liberation Sans';line-height:10.0px;transform:scaleX(1.1000) translateX(-100%)">19</div>
<div class="t" style="left:827.1px;top:410.0px;font:10px 'Liberation Sans';line-height:10.0px;transform:scaleX(1.1000) translateX(-100%)">140</div>
<div class="t" style="left:880.1px;top:410.0px;font:10px 'Liberation Sans';line-height:10.0px;transform:scaleX(1.1000) translateX(-100%)">14</div>
<div class="t" style="left:29.5px;top:425.0px;font:bold 10px 'Liberation Sans';line-height:10.0px;transform:scaleX(1.1299)">Window</div>
<div class="t" style="left:43.8px;top:440.0px;font:10px 'Liberation Sans';line-height:10.0px;transform:scaleX(1.1000)">pfc_w_statusbar</div>
<div class="t" style="left:349.5px;top:440.0px;font:10px 'Liberation Sans';line-height:10.0px;transform:scaleX(1.1000)">08/24/2017 07:56</div>
<div class="t" style="left:508.1px;top:440.0px;font:10px 'Liberation Sans';line-height:10.0px;transform:scaleX(1.1000) translateX(-100%)">97,414</div>
<div class="t" style="left:561.1px;top:440.0px;font:10px 'Liberation Sans';line-height:10.0px;transform:scaleX(1.1000) translateX(-100%)">1,597</div>
<div class="t" style="left:614.1px;top:440.0px;font:10px 'Liberation Sans';line-height:10.0px;transform:scaleX(1.1000) translateX(-100%)">315</div>
<div class="t" style="left:667.1px;top:440.0px;font:10px 'Liberation Sans';line-height:10.0px;transform:scaleX(1.1000) translateX(-100%)">975</div>
<div class="t" style="left:720.1px;top:440.0px;font:10px 'Liberation Sans';line-height:10.0px;transform:scaleX(1.1000) translateX(-100%)">171</div>
<div class="t" style="left:773.1px;top:440.0px;font:10px 'Liberation Sans';line-height:10.0px;transform:scaleX(1.1000) translateX(-100%)">12</div>
<div class="t" style="left:827.1px;top:440.0px;font:10px 'Liberation Sans';line-height:10.0px;transform:scaleX(1.1000) translateX(-100%)">13</div>
<div class="t" style="left:43.8px;top:456.0px;font:10px 'Liberation Sans';line-height:10.0px;transform:scaleX(1.1000)">pfc_w_toolbars</div>
<div class="t" style="left:349.5px;top:456.0px;font:10px 'Liberation Sans';line-height:10.0px;transform:scaleX(1.1000)">07/03/2017 17:14</div>
<div class="t" style="left:508.1px;top:456.0px;font:10px 'Liberation Sans';line-height:10.0px;transform:scaleX(1.1000) translateX(-100%)">63,122</div>
<div class="t" style="left:561.1px;top:456.0px;font:10px 'Liberation Sans';line-height:10.0px;transform:scaleX(1.1000) translateX(-100%)">1,068</div>
<div class="t" style="left:614.1px;top:456.0px;font:10px 'Liberation Sans';line-height:10.0px;transform:scaleX(1.1000) translateX(-100%)">203</div>
<div class="t" style="left:667.1px;top:456.0px;font:10px 'Liberation Sans';line-height:10.0px;transform:scaleX(1.1000) translateX(-100%)">498</div>
<div class="t" style="left:720.1px;top:456.0px;font:10px 'Liberation Sans';line-height:10.0px;transform:scaleX(1.1000) translateX(-100%)">100</div>
<div class="t" style="left:773.1px;top:456.0px;font:10px 'Liberation Sans';line-height:10.0px;transform:scaleX(1.1000) translateX(-100%)">19</div>
<div class="t" style="left:29.0px;top:474.0px;font:10px 'Liberation Sans';line-height:10.0px;transform:scaleX(1.0671)">2 Window Objects</div>
<div class="t" style="left:508.1px;top:474.0px;font:10px 'Liberation Sans';line-height:10.0px;transform:scaleX(1.1000) translateX(-100%)">160,536</div>
<div class="t" style="left:561.1px;top:474.0px;font:10px 'Liberation Sans';line-height:10.0px;transform:scaleX(1.1000) translateX(-100%)">2,665</div>
<div class="t" style="left:614.1px;top:474.0px;font:10px 'Liberation Sans';line-height:10.0px;transform:scaleX(1.1000) translateX(-100%)">518</div>
<div class="t" style="left:667.1px;top:474.0px;font:10px 'Liberation Sans';line-height:10.0px;transform:scaleX(1.1000) translateX(-100%)">1,473</div>
<div class="t" style="left:720.1px;top:474.0px;font:10px 'Liberation Sans';line-height:10.0px;transform:scaleX(1.1000) translateX(-100%)">271</div>
<div class="t" style="left:773.1px;top:474.0px;font:10px 'Liberation Sans';line-height:10.0px;transform:scaleX(1.1000) translateX(-100%)">31</div>
<div class="t" style="left:827.1px;top:474.0px;font:10px 'Liberation Sans';line-height:10.0px;transform:scaleX(1.1000) translateX(-100%)">13</div>
<div class="t" style="left:13.0px;top:493.0px;font:10px 'Liberation Sans';line-height:10.0px;transform:scaleX(1.1163)">Total no. of Objects in pfcwnsrv.pbl: 15</div>
<div class="t" style="left:508.1px;top:493.0px;font:10px 'Liberation Sans';line-height:10.0px;transform:scaleX(1.1000) translateX(-100%)">1,061,106</div>
<div class="t" style="left:561.1px;top:493.0px;font:10px 'Liberation Sans';line-height:10.0px;transform:scaleX(1.1000) translateX(-100%)">17,333</div>
<div class="t" style="left:614.1px;top:493.0px;font:10px 'Liberation Sans';line-height:10.0px;transform:scaleX(1.1000) translateX(-100%)">3,019</div>
<div class="t" style="left:667.1px;top:493.0px;font:10px 'Liberation Sans';line-height:10.0px;transform:scaleX(1.1000) translateX(-100%)">9,716</div>
<div class="t" style="left:720.1px;top:493.0px;font:10px 'Liberation Sans';line-height:10.0px;transform:scaleX(1.1000) translateX(-100%)">1,748</div>
<div class="t" style="left:773.1px;top:493.0px;font:10px 'Liberation Sans';line-height:10.0px;transform:scaleX(1.1000) translateX(-100%)">87</div>
<div class="t" style="left:827.1px;top:493.0px;font:10px 'Liberation Sans';line-height:10.0px;transform:scaleX(1.1000) translateX(-100%)">154</div>
<div class="t" style="left:880.1px;top:493.0px;font:10px 'Liberation Sans';line-height:10.0px;transform:scaleX(1.1000) translateX(-100%)">14</div>
<div class="t" style="left:13.7px;top:523.0px;font:bold 12px 'Liberation Sans';line-height:12.0px;transform:scaleX(1.0929)">pfemain.pbl</div>
<div class="t" style="left:349.5px;top:527.0px;font:10px 'Liberation Sans';line-height:10.0px;transform:scaleX(1.1000)">Last Modified</div>
<div class="t" style="left:507.6px;top:514.0px;font:10px 'Liberation Sans';line-height:10.0px;transform:scaleX(1.1000) translateX(-100%)">Object</div>
<div class="t" style="left:507.6px;top:527.0px;font:10px 'Liberation Sans';line-height:10.0px;transform:scaleX(1.1000) translateX(-100%)">Size (bytes)</div>
<div class="t" style="left:560.6px;top:514.0px;font:10px 'Liberation Sans';line-height:10.0px;transform:scaleX(1.1000) translateX(-100%)">Source</div>
<div class="t" style="left:560.6px;top:527.0px;font:10px 'Liberation Sans';line-height:10.0px;transform:scaleX(1.1000) translateX(-100%)">Lines</div>
<div class="t" style="left:613.6px;top:514.0px;font:10px 'Liberation Sans';line-height:10.0px;transform:scaleX(1.1000) translateX(-100%)">Code</div>
<div class="t" style="left:613.6px;top:527.0px;font:10px 'Liberation Sans';line-height:10.0px;transform:scaleX(1.1000) translateX(-100%)">Lines</div>
<div class="t" style="left:666.6px;top:514.0px;font:10px 'Liberation Sans';line-height:10.0px;transform:scaleX(1.1000) translateX(-100%)">Comment</div>
<div class="t" style="left:666.6px;top:527.0px;font:10px 'Liberation Sans';line-height:10.0px;transform:scaleX(1.1000) translateX(-100%)">Lines</div>
<div class="t" style="left:719.6px;top:514.0px;font:10px 'Liberation Sans';line-height:10.0px;transform:scaleX(1.1000) translateX(-100%)">Empty</div>
<div class="t" style="left:719.6px;top:527.0px;font:10px 'Liberation Sans';line-height:10.0px;transform:scaleX(1.1000) translateX(-100%)">Lines</div>
<div class="t" style="left:772.6px;top:514.0px;font:10px 'Liberation Sans';line-height:10.0px;transform:scaleX(1.1000) translateX(-100%)">No. of</div>
<div class="t" style="left:772.6px;top:527.0px;font:10px 'Liberation Sans';line-height:10.0px;transform:scaleX(1.1000) translateX(-100%)">Events</div>
<div class="t" style="left:826.6px;top:514.0px;font:10px 'Liberation Sans';line-height:10.0px;transform:scaleX(1.1000) translateX(-100%)">No. of</div>
<div class="t" style="left:826.6px;top:527.0px;font:10px 'Liberation Sans';line-height:10.0px;transform:scaleX(1.1000) translateX(-100%)">Func&#x27;s</div>
<div class="t" style="left:879.6px;top:514.0px;font:10px 'Liberation Sans';line-height:10.0px;transform:scaleX(1.1000) translateX(-100%)">No. of</div>
<div class="t" style="left:879.6px;top:527.0px;font:10px 'Liberation Sans';line-height:10.0px;transform:scaleX(1.1000) translateX(-100%)">Subr&#x27;s</div>
<div class="t" style="left:932.6px;top:514.0px;font:10px 'Liberation Sans';line-height:10.0px;transform:scaleX(1.1000) translateX(-100%)">No. of</div>
<div class="t" style="left:932.6px;top:527.0px;font:10px 'Liberation Sans';line-height:10.0px;transform:scaleX(1.1000) translateX(-100%)">Ext.Fn&#x27;s</div>
<div class="t" style="left:29.7px;top:546.0px;font:bold 10px 'Liberation Sans';line-height:10.0px;transform:scaleX(1.1567)">Menu</div>
<div class="t" style="left:43.8px;top:561.0px;font:10px 'Liberation Sans';line-height:10.0px;transform:scaleX(1.1000)">m_dw</div>
<div class="t" style="left:349.5px;top:561.0px;font:10px 'Liberation Sans';line-height:10.0px;transform:scaleX(1.1000)">07/03/2017 17:11</div>
<div class="t" style="left:508.1px;top:561.0px;font:10px 'Liberation Sans';line-height:10.0px;transform:scaleX(1.1000) translateX(-100%)">3,532</div>
<div class="t" style="left:561.1px;top:561.0px;font:10px 'Liberation Sans';line-height:10.0px;transform:scaleX(1.1000) translateX(-100%)">103</div>
<div class="t" style="left:720.1px;top:561.0px;font:10px 'Liberation Sans';line-height:10.0px;transform:scaleX(1.1000) translateX(-100%)">21</div>
<div class="t" style="left:43.8px;top:577.0px;font:10px 'Liberation Sans';line-height:10.0px;transform:scaleX(1.1000)">m_edit</div>
<div class="t" style="left:349.5px;top:577.0px;font:10px 'Liberation Sans';line-height:10.0px;transform:scaleX(1.1000)">07/03/2017 17:11</div>
<div class="t" style="left:508.1px;top:577.0px;font:10px 'Liberation Sans';line-height:10.0px;transform:scaleX(1.1000) translateX(-100%)">1,428</div>
<div class="t" style="left:561.1px;top:577.0px;font:10px 'Liberation Sans';line-height:10.0px;transform:scaleX(1.1000) translateX(-100%)">43</div>
<div class="t" style="left:720.1px;top:577.0px;font:10px 'Liberation Sans';line-height:10.0px;transform:scaleX(1.1000) translateX(-100%)">9</div>
<div class="t" style="left:43.8px;top:593.0px;font:10px 'Liberation Sans';line-height:10.0px;transform:scaleX(1.1000)">m_lvs</div>
<div class="t" style="left:349.5px;top:593.0px;font:10px 'Liberation Sans';line-height:10.0px;transform:scaleX(1.1000)">07/03/2017 17:11</div>
<div class="t" style="left:508.1px;top:593.0px;font:10px 'Liberation Sans';line-height:10.0px;transform:scaleX(1.1000) translateX(-100%)">5,680</div>
<div class="t" style="left:561.1px;top:593.0px;font:10px 'Liberation Sans';line-height:10.0px;transform:scaleX(1.1000) translateX(-100%)">188</div>
<div class="t" style="left:720.1px;top:593.0px;font:10px 'Liberation Sans';line-height:10.0px;transform:scaleX(1.1000) translateX(-100%)">38</div>
<div class="t" style="left:43.8px;top:609.0px;font:10px 'Liberation Sans';line-height:10.0px;transform:scaleX(1.1000)">m_oc</div>
<div class="t" style="left:349.5px;top:609.0px;font:10px 'Liberation Sans';line-height:10.0px;transform:scaleX(1.1000)">07/03/2017 17:11</div>
<div class="t" style="left:508.1px;top:609.0px;font:10px 'Liberation Sans';line-height:10.0px;transform:scaleX(1.1000) translateX(-100%)">1,684</div>
<div class="t" style="left:561.1px;top:609.0px;font:10px 'Liberation Sans';line-height:10.0px;transform:scaleX(1.1000) translateX(-100%)">53</div>
<div class="t" style="left:720.1px;top:609.0px;font:10px 'Liberation Sans';line-height:10.0px;transform:scaleX(1.1000) translateX(-100%)">11</div>
<div class="t" style="left:43.8px;top:625.0px;font:10px 'Liberation Sans';line-height:10.0px;transform:scaleX(1.1000)">m_tvs</div>
<div class="t" style="left:349.5px;top:625.0px;font:10px 'Liberation Sans';line-height:10.0px;transform:scaleX(1.1000)">07/03/2017 17:11</div>
<div class="t" style="left:508.1px;top:625.0px;font:10px 'Liberation Sans';line-height:10.0px;transform:scaleX(1.1000) translateX(-100%)">2,624</div>
<div class="t" style="left:561.1px;top:625.0px;font:10px 'Liberation Sans';line-height:10.0px;transform:scaleX(1.1000) translateX(-100%)">88</div>
<div class="t" style="left:720.1px;top:625.0px;font:10px 'Liberation Sans';line-height:10.0px;transform:scaleX(1.1000) translateX(-100%)">18</div>
<div class="t" style="left:43.8px;top:641.0px;font:10px 'Liberation Sans';line-height:10.0px;transform:scaleX(1.1000)">m_view</div>
<div class="t" style="left:349.5px;top:641.0px;font:10px 'Liberation Sans';line-height:10.0px;transform:scaleX(1.1000)">07/03/2017 17:11</div>
<div class="t" style="left:508.1px;top:641.0px;font:10px 'Liberation Sans';line-height:10.0px;transform:scaleX(1.1000) translateX(-100%)">4,058</div>
<div class="t" style="left:561.1px;top:641.0px;font:10px 'Liberation Sans';line-height:10.0px;transform:scaleX(1.1000) translateX(-100%)">118</div>
<div class="t" style="left:720.1px;top:641.0px;font:10px 'Liberation Sans';line-height:10.0px;transform:scaleX(1.1000) translateX(-100%)">24</div>
<div class="t" style="left:28.9px;top:659.0px;font:10px 'Liberation Sans';line-height:10.0px;transform:scaleX(1.0621)">6 Menu Objects</div>
<div class="t" style="left:508.1px;top:659.0px;font:10px 'Liberation Sans';line-height:10.0px;transform:scaleX(1.1000) translateX(-100%)">19,006</div>
<div class="t" style="left:561.1px;top:659.0px;font:10px 'Liberation Sans';line-height:10.0px;transform:scaleX(1.1000) translateX(-100%)">593</div>
<div class="t" style="left:720.1px;top:659.0px;font:10px 'Liberation Sans';line-height:10.0px;transform:scaleX(1.1000) translateX(-100%)">121</div>
<div class="t" style="left:29.3px;top:674.0px;font:bold 10px 'Liberation Sans';line-height:10.0px;transform:scaleX(1.1807)">UserObject</div>
<div class="t" style="left:43.8px;top:689.0px;font:10px 'Liberation Sans';line-height:10.0px;transform:scaleX(1.1000)">n_base</div>
<div class="t" style="left:349.5px;top:689.0px;font:10px 'Liberation Sans';line-height:10.0px;transform:scaleX(1.1000)">07/03/2017 17:08</div>
<div class="t" style="left:508.1px;top:689.0px;font:10px 'Liberation Sans';line-height:10.0px;transform:scaleX(1.1000) translateX(-100%)">540</div>
<div class="t" style="left:561.1px;top:689.0px;font:10px 'Liberation Sans';line-height:10.0px;transform:scaleX(1.1000) translateX(-100%)">17</div>
<div class="t" style="left:720.1px;top:689.0px;font:10px 'Liberation Sans';line-height:10.0px;transform:scaleX(1.1000) translateX(-100%)">4</div>
<div class="t" style="left:43.8px;top:705.0px;font:10px 'Liberation Sans';line-height:10.0px;transform:scaleX(1.1000)">n_cn</div>
<div class="t" style="left:349.5px;top:705.0px;font:10px 'Liberation Sans';line-height:10.0px;transform:scaleX(1.1000)">07/03/2017 17:11</div>
<div class="t" style="left:508.1px;top:705.0px;font:10px 'Liberation Sans';line-height:10.0px;transform:scaleX(1.1000) translateX(-100%)">590</div>
<div class="t" style="left:561.1px;top:705.0px;font:10px 'Liberation Sans';line-height:10.0px;transform:scaleX(1.1000) translateX(-100%)">19</div>
<div class="t" style="left:720.1px;top:705.0px;font:10px 'Liberation Sans';line-height:10.0px;transform:scaleX(1.1000) translateX(-100%)">4</div>
<div class="t" style="left:12.6px;top:725.0px;font:10px 'Liberation Sans';line-height:10.0px;transform:scaleX(1.0742)">Page 15 of 21</div>
<div class="t" style="left:26.4px;top:754.0px;font:12px 'Liberation Sans';line-height:12.0px;transform:scaleX(1.0512)">Save As...</div>
<div class="t" style="left:136.3px;top:754.0px;font:12px 'Liberation Sans';line-height:12.0px;transform:scaleX(1.0370)">Print</div>
<div class="t" style="left:198.4px;top:760.0px;font:12px 'Liberation Sans';line-height:12.0px;transform:scaleX(1.0697)">Scan completed. 436 objects scanned, taking 01:37.247</div>
<div class="t" style="left:966.4px;top:754.0px;font:12px 'Liberation Sans';line-height:12.0px;transform:scaleX(0.9743)"><u>C</u>lose</div>
</body></html>
